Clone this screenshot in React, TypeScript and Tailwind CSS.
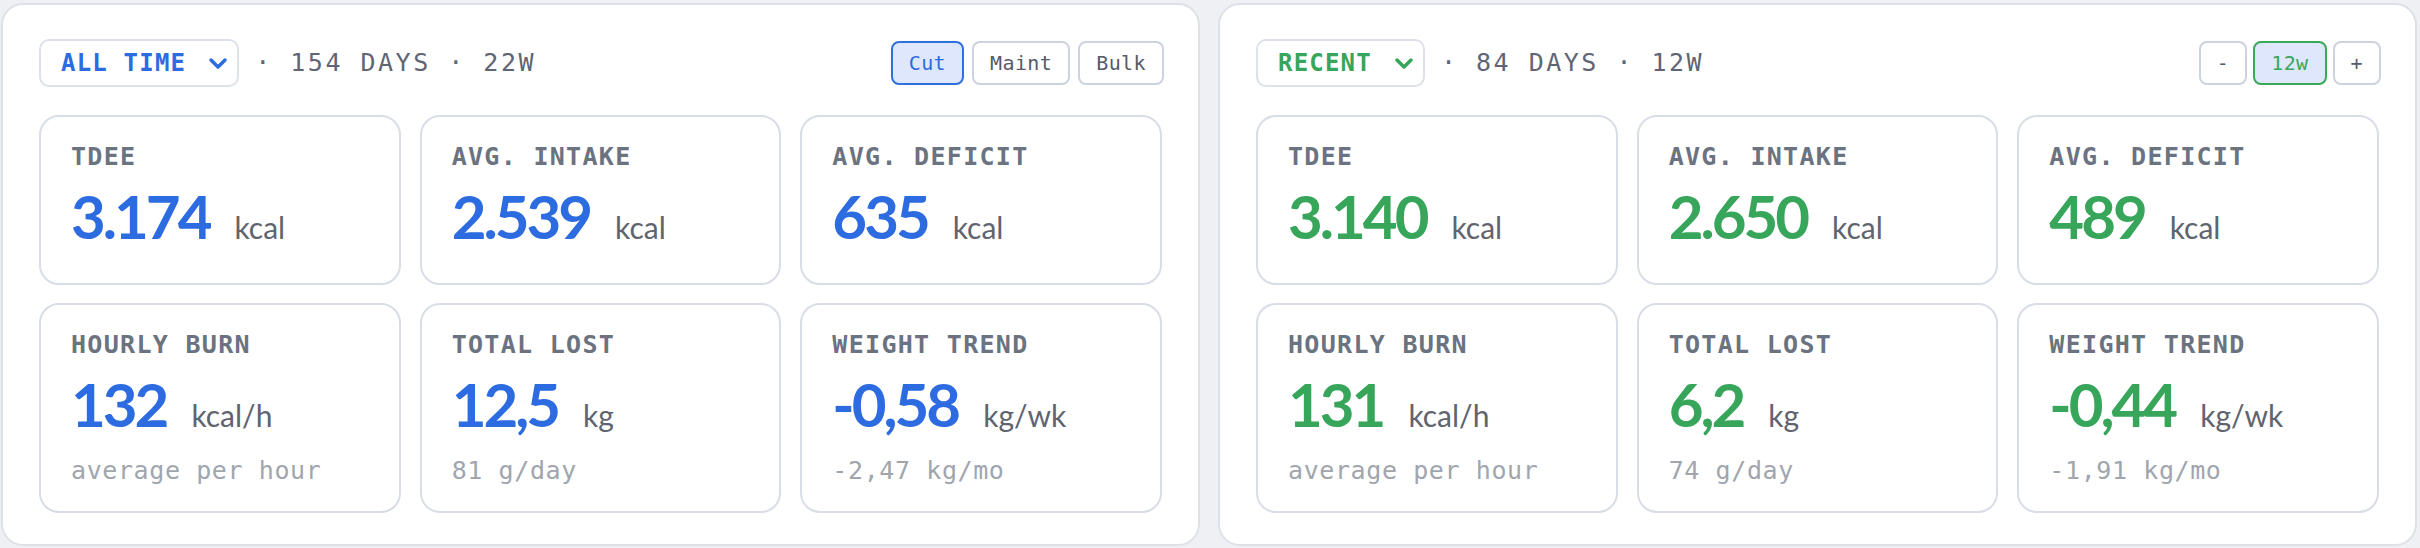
type Accent = "blue" | "green";

interface Metric {
  label: string;
  value: string;
  unit: string;
  sub?: string;
}

interface PanelProps {
  accent: Accent;
  range: string;
  meta: string;
  controls: { label: string; active?: boolean }[];
  controlGap: string;
  metrics: Metric[];
}

const accentText: Record<Accent, string> = {
  blue: "text-[#2d6be0]",
  green: "text-[#37a65b]",
};

const activeBtn: Record<Accent, string> = {
  blue: "border-[#2f6fe0] text-[#2d6be0]",
  green: "border-[#38a85b] text-[#37a65b]",
};

function Chevron({ accent }: { accent: Accent }) {
  return (
    <svg width="20" height="13" viewBox="0 0 20 13" className={accentText[accent]}>
      <polyline
        points="3,3 10,10 17,3"
        fill="none"
        stroke="currentColor"
        strokeWidth="3.5"
        strokeLinecap="round"
        strokeLinejoin="round"
      />
    </svg>
  );
}

function MetricCard({ m, accent }: { m: Metric; accent: Accent }) {
  return (
    <div className="rounded-[20px] border-2 border-[#d9dde7] bg-white px-[30px] pt-[26px]">
      <div className="font-['DejaVu_Sans_Mono',monospace] text-[25px] leading-[28px] font-bold tracking-[1.3px] text-[#6b7280]">
        {m.label}
      </div>
      <div className="mt-[15px] flex items-baseline gap-[25px]">
        <span
          className={`font-['Lato',sans-serif] text-[60px] leading-none font-bold tracking-[-3px] ${accentText[accent]}`}
        >
          {m.value}
        </span>
        <span className="font-['Lato',sans-serif] text-[30px] leading-none text-[#60646f]">{m.unit}</span>
      </div>
      {m.sub && (
        <div className="mt-[22px] font-['DejaVu_Sans_Mono',monospace] text-[25px] leading-[30px] tracking-[0.6px] text-[#a0a5ae]">
          {m.sub}
        </div>
      )}
    </div>
  );
}

function Panel({ accent, range, meta, controls, controlGap, metrics }: PanelProps) {
  return (
    <div className="flex-1 rounded-[22px] border-2 border-[#dde0e8] bg-white px-[36px] pt-[34px] pb-[31px]">
      {/* header */}
      <div className="flex h-[48px] items-center">
        <div className="flex h-[48px] items-center gap-[22px] rounded-[10px] border-2 border-[#dde1ea] pr-[9px] pl-[20px]">
          <span
            className={`font-['DejaVu_Sans_Mono',monospace] text-[24px] font-bold tracking-[1.2px] ${accentText[accent]}`}
          >
            {range}
          </span>
          <Chevron accent={accent} />
        </div>
        <span className="ml-[16px] font-['DejaVu_Sans_Mono',monospace] text-[25px] tracking-[2.5px] text-[#5f6573]">
          {meta}
        </span>
        <div className={`ml-auto mr-[-2px] flex ${controlGap}`}>
          {controls.map((c) => (
            <button
              key={c.label}
              className={`flex h-[44px] items-center rounded-[8px] border-2 px-[16px] font-['DejaVu_Sans_Mono',monospace] text-[20px] tracking-[0.4px] ${
                c.active ? `bg-[#dfe7fc] ${activeBtn[accent]}` : "border-[#cdd3de] bg-white text-[#555b68]"
              }`}
            >
              {c.label}
            </button>
          ))}
        </div>
      </div>

      {/* metrics */}
      <div className="mt-[28px] grid grid-cols-3 grid-rows-[170px_210px] gap-x-[19px] gap-y-[18px]">
        {metrics.map((m) => (
          <MetricCard key={m.label} m={m} accent={accent} />
        ))}
      </div>
    </div>
  );
}

export default function App() {
  return (
    <div className="flex h-[548px] w-[2420px] items-start gap-[18px] bg-[#eef0f4] pt-[3px] pr-[3px] pl-[1px]">
      <Panel
        accent="blue"
        range="ALL TIME"
        meta="· 154 DAYS · 22W"
        controlGap="gap-[8px]"
        controls={[{ label: "Cut", active: true }, { label: "Maint" }, { label: "Bulk" }]}
        metrics={[
          { label: "TDEE", value: "3.174", unit: "kcal" },
          { label: "AVG. INTAKE", value: "2.539", unit: "kcal" },
          { label: "AVG. DEFICIT", value: "635", unit: "kcal" },
          { label: "HOURLY BURN", value: "132", unit: "kcal/h", sub: "average per hour" },
          { label: "TOTAL LOST", value: "12,5", unit: "kg", sub: "81 g/day" },
          { label: "WEIGHT TREND", value: "-0,58", unit: "kg/wk", sub: "-2,47 kg/mo" },
        ]}
      />
      <Panel
        accent="green"
        range="RECENT"
        meta="· 84 DAYS · 12W"
        controlGap="gap-[6px]"
        controls={[{ label: "-" }, { label: "12w", active: true }, { label: "+" }]}
        metrics={[
          { label: "TDEE", value: "3.140", unit: "kcal" },
          { label: "AVG. INTAKE", value: "2.650", unit: "kcal" },
          { label: "AVG. DEFICIT", value: "489", unit: "kcal" },
          { label: "HOURLY BURN", value: "131", unit: "kcal/h", sub: "average per hour" },
          { label: "TOTAL LOST", value: "6,2", unit: "kg", sub: "74 g/day" },
          { label: "WEIGHT TREND", value: "-0,44", unit: "kg/wk", sub: "-1,91 kg/mo" },
        ]}
      />
    </div>
  );
}
